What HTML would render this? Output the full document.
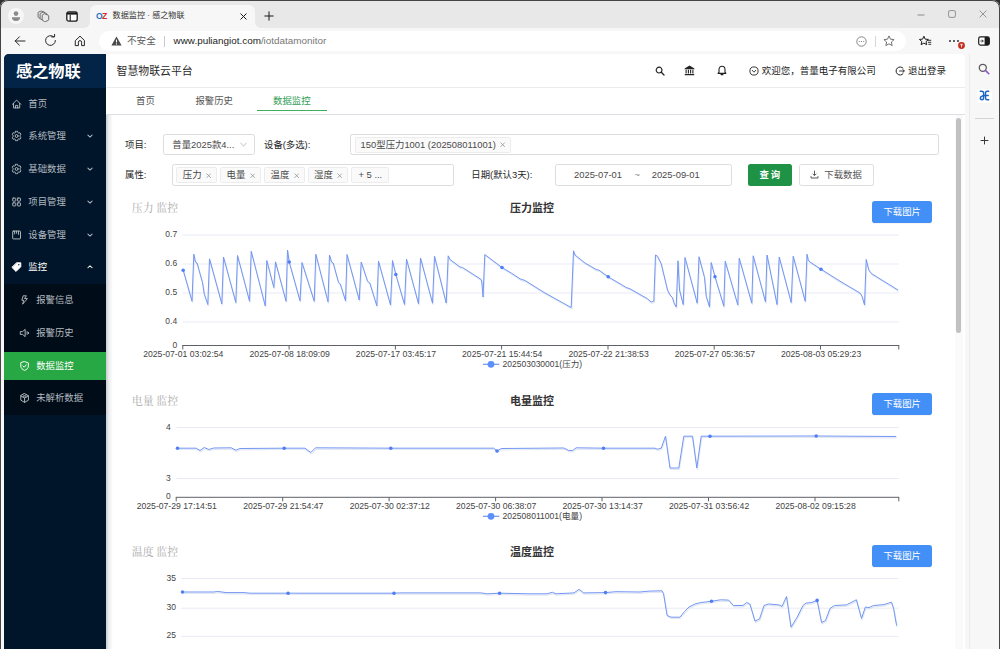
<!DOCTYPE html>
<html lang="zh-CN">
<head>
<meta charset="utf-8">
<title>数据监控 · 感之物联</title>
<style>
*{box-sizing:border-box;margin:0;padding:0}
html,body{width:1000px;height:649px;overflow:hidden;background:#f7f7f7}
body{font-family:"Liberation Sans","Noto Sans CJK SC",sans-serif;font-size:9.4px;color:#333;position:relative}
.abs{position:absolute}
#win{position:absolute;left:0;top:0;width:1000px;height:649px;background:#f7f7f7;overflow:hidden}
/* window frame */
#frame-l{display:none}
#frame-r{display:none}
#frame-t{display:none}
#corners{left:0;top:0;width:1000px;height:700px;border:1px solid #454545;border-radius:8px;box-shadow:0 0 0 12px #2e2e2e;pointer-events:none}
#titlebar{left:0;top:0;width:1000px;height:28px;background:#e8e8e8}
#tab{left:90px;top:5px;width:164.5px;height:23.5px;background:#f7f7f7;border-radius:6px 6px 0 0}
#toolbar{left:1px;top:28px;width:998px;height:26px;background:#f7f7f7}
#addr{left:99px;top:31px;width:807px;height:20px;background:#fff;border-radius:10px}
.t{position:absolute;white-space:nowrap;line-height:1}
/* page */
#page{left:4px;top:54px;width:960.5px;height:595px;background:#fff;border-radius:5px 5px 0 0;overflow:hidden}
#side{left:0;top:0;width:102px;height:595px;background:#001529}
#logo{left:0;top:0;width:102px;height:33.5px;background:#032347}
#logo .t{left:12px;top:9px;font-size:16.2px;font-weight:bold;color:#fff;letter-spacing:0}
.mi{position:absolute;left:0;width:102px;height:32.7px;color:#a6adb4}
.mi .t{top:50%;transform:translateY(-50%);font-size:9.4px}
.mi svg{position:absolute;top:50%;transform:translateY(-50%)}
#sub{left:0;top:230.3px;width:102px;height:130.5px;background:#000c17}
#active{left:0;top:297.9px;width:102px;height:28.1px;background:#28a745}
/* header */
#hdr{left:102px;top:0;width:858.5px;height:33.5px;background:#fff;border-bottom:1px solid #ebecee}
#tabs{left:102px;top:33.5px;width:858.5px;height:27px;background:#fff;border-bottom:1px solid #dcdfe4;box-shadow:0 1px 2px rgba(0,21,41,.06)}
#tabs .t{font-size:9.4px;color:#555;top:8.5px}
#ink{left:151px;top:22.3px;width:70.4px;height:1.6px;background:#3fae5e}
/* form */
.sel{position:absolute;border:1px solid #dcdcdc;border-radius:2.5px;background:#fff;height:21.6px}
.tag{padding-left:1px;position:absolute;border:1px solid #ececec;background:#fafafa;border-radius:1.5px;height:15.6px;top:2.2px;font-size:9.4px;color:#4a4a4a;line-height:14px;white-space:nowrap}
.lbl{position:absolute;font-size:9.4px;color:#262626;line-height:1;white-space:nowrap}
.btn{position:absolute;border-radius:2.5px;height:21.8px;font-size:9.4px;line-height:21px;text-align:center;white-space:nowrap}
.dl{position:absolute;left:766.2px;width:60px;height:21.8px;border-radius:2.8px;background:#4290f7;color:#fff;font-size:9.4px;line-height:21px;text-align:center;box-shadow:0 1px 1px rgba(0,0,0,.05)}
.h3{position:absolute;left:25.8px;font-family:"Liberation Serif","Noto Serif CJK SC",serif;font-size:10.9px;color:#a9a9a9;line-height:1;white-space:nowrap}
.ttl{position:absolute;left:404px;font-size:11px;font-weight:bold;color:#333;line-height:1;white-space:nowrap}
svg text{font-family:"Liberation Sans","Noto Sans CJK SC",sans-serif}
</style>
</head>
<body>
<div id="win">
  <div class="abs" id="titlebar"></div>
  <div class="abs" id="tab"></div>
  <div class="abs" id="toolbar"></div>
  <svg class="abs" style="left:84px;top:22px" width="6" height="6" viewBox="0 0 6 6"><path d="M6 0 V6 H0 A6 6 0 0 0 6 0 Z" fill="#f7f7f7"/></svg><svg class="abs" style="left:254.5px;top:22px" width="6" height="6" viewBox="0 0 6 6"><path d="M0 0 V6 H6 A6 6 0 0 1 0 0 Z" fill="#f7f7f7"/></svg>
  <div class="abs" id="addr"></div>
  <!--CHROME-START-->
  <svg class="abs" style="left:7.70px;top:8.00px" width="16" height="16" viewBox="0 0 16 16" ><circle cx="8" cy="8" r="8" fill="#f6f6f6"/><circle cx="8" cy="5.6" r="2.3" fill="#8a8a8a"/><path d="M3.9 9.3 H12.1 A4.1 3.6 0 0 1 3.9 9.3 Z" fill="#8a8a8a"/></svg>
  <svg class="abs" style="left:36.00px;top:9.00px" width="14" height="14" viewBox="0 0 14 14" ><g stroke="#666" fill="none" stroke-width="0.95" stroke-linejoin="round" stroke-linecap="round"><path d="M8.9 4.9 L12.2 6.2 Q12.7 6.4 12.7 7 V10.6 Q12.7 11.2 12.2 11.4 L9.5 12.6 Q8.9 12.8 8.4 12.5 L6.6 11.4 Q6.2 11.1 6.2 10.6 V6.4 Q6.2 5.8 6.8 5.6 Z"/><path d="M6.2 10.9 L4.6 10 Q4.1 9.7 4.1 9.2 V5 Q4.1 4.4 4.7 4.2 L6.9 3.4 Q7.5 3.2 8 3.4 L10.6 4.5 Q11 4.7 11 5.4"/><path d="M4.1 9.6 L2.6 8.7 Q2.1 8.4 2.1 7.9 V3.8 Q2.1 3.2 2.7 3 L4.9 2.2 Q5.5 2 6 2.2 L8.3 3.2"/></g></svg>
  <svg class="abs" style="left:65.50px;top:10.50px" width="12" height="11" viewBox="0 0 12 11" ><rect x="0.8" y="0.8" width="10.4" height="9.4" rx="2" fill="#fff" stroke="#1b1b1b" stroke-width="1.3"/><path d="M1 1.4 H11 V3.6 H1 Z" fill="#1b1b1b"/><path d="M4.2 3.6 V10" stroke="#1b1b1b" stroke-width="1.1"/></svg>
  <span class="t" style="left:96px;top:12px;font-size:8.6px;font-weight:bold;letter-spacing:-0.6px"><span style="color:#1f6fc4">O</span><span style="color:#d82b2b">Z</span></span>
  <span class="t" id="tabtitle" style="left:112.6px;top:11.8px;font-size:8.1px;color:#333">数据监控 · 感之物联</span>
  <svg class="abs" style="left:239.90px;top:13.10px" width="7" height="7" viewBox="0 0 7 7" ><path d="M0.8 0.8 L6.2 6.2 M6.2 0.8 L0.8 6.2" stroke="#1b1b1b" fill="none" stroke-linecap="round" stroke-linejoin="round" stroke-width="1"/></svg>
  <svg class="abs" style="left:263.60px;top:11.20px" width="10" height="10" viewBox="0 0 10 10" ><path d="M5 0.8 V9.2 M0.8 5 H9.2" stroke="#1b1b1b" fill="none" stroke-linecap="round" stroke-linejoin="round" stroke-width="1"/></svg>
  <svg class="abs" style="left:13.60px;top:35.60px" width="12" height="10" viewBox="0 0 12 10" ><path d="M11 5 H1.2 M5.4 0.8 L1.2 5 L5.4 9.2" stroke="#1b1b1b" fill="none" stroke-linecap="round" stroke-linejoin="round" stroke-width="0.95"/></svg>
  <svg class="abs" style="left:43.50px;top:34.10px" width="13" height="13" viewBox="0 0 13 13" ><path d="M11.4 6.5 A4.9 4.9 0 1 1 9.6 2.7" stroke="#1b1b1b" fill="none" stroke-linecap="round" stroke-linejoin="round" stroke-width="0.95"/><path d="M7.6 2.9 H10.6 V0.4" stroke="#1b1b1b" fill="none" stroke-linecap="round" stroke-linejoin="round" stroke-width="0.95"/></svg>
  <svg class="abs" style="left:73.90px;top:34.60px" width="12" height="12" viewBox="0 0 12 12" ><path d="M1.6 5.4 L6 1.2 L10.4 5.4 V10.6 H7.6 V7.2 A1.6 1.6 0 0 0 4.4 7.2 V10.6 H1.6 Z" stroke="#1b1b1b" fill="none" stroke-linecap="round" stroke-linejoin="round" stroke-width="0.95"/></svg>
  <svg class="abs" style="left:111.30px;top:36.20px" width="11" height="10" viewBox="0 0 11 10" ><path d="M5.5 0.6 L10.6 9.4 H0.4 Z" fill="#4a4a4a"/><path d="M5.5 3.6 V6.4" stroke="#fff" stroke-width="1.1"/><circle cx="5.5" cy="7.9" r="0.65" fill="#fff"/></svg>
  <span class="t" style="left:127px;top:36.3px;font-size:9.6px;color:#5a5a5a">不安全</span>
  <div class="abs" style="left:164.2px;top:35.5px;width:1px;height:11px;background:#c9c9c9"></div>
  <span class="t" id="url" style="left:173.6px;top:36.2px;font-size:9.88px;color:#1b1b1b;letter-spacing:0">www.puliangiot.com<span style="color:#777">/iotdatamonitor</span></span>
  <svg class="abs" style="left:855.90px;top:35.50px" width="11" height="11" viewBox="0 0 11 11" ><circle cx="5.5" cy="5.5" r="4.7" fill="none" stroke="#7a7a7a" stroke-width="0.9"/><circle cx="3.3" cy="5.5" r="0.6" fill="#7a7a7a"/><circle cx="5.5" cy="5.5" r="0.6" fill="#7a7a7a"/><circle cx="7.7" cy="5.5" r="0.6" fill="#7a7a7a"/></svg>
  <div class="abs" style="left:875px;top:35.5px;width:1px;height:11px;background:#d6d6d6"></div>
  <svg class="abs" style="left:883.40px;top:35.00px" width="12" height="12" viewBox="0 0 12 12" ><path d="M6 0.9 L7.5 4.2 L11.1 4.6 L8.4 7 L9.2 10.6 L6 8.8 L2.8 10.6 L3.6 7 L0.9 4.6 L4.5 4.2 Z" fill="none" stroke="#6a6a6a" stroke-width="0.95" stroke-linejoin="round"/></svg>
  <svg class="abs" style="left:919.10px;top:35.00px" width="13" height="12" viewBox="0 0 13 12" ><path d="M4.90 1.20 L6.19 4.12 L9.37 4.45 L6.99 6.58 L7.66 9.70 L4.90 8.10 L2.14 9.70 L2.81 6.58 L0.43 4.45 L3.61 4.12 Z" stroke="#1b1b1b" fill="none" stroke-linejoin="round" stroke-width="1"/><path d="M8.3 5.3 H12.2 M8.9 7.3 H12.2 M9.4 9.3 H12.2" stroke="#1b1b1b" stroke-width="0.9"/><path d="M7.2 4.2 H9.4 V10.4 H7.2" fill="#f7f7f7" stroke="none" opacity="0"/></svg>
  <svg class="abs" style="left:948.40px;top:39.00px" width="12" height="4" viewBox="0 0 12 4" ><circle cx="2" cy="2" r="0.9" fill="#1b1b1b"/><circle cx="6" cy="2" r="0.9" fill="#1b1b1b"/><circle cx="10" cy="2" r="0.9" fill="#1b1b1b"/></svg>
  <svg class="abs" style="left:957.80px;top:41.50px" width="7" height="7" viewBox="0 0 7 7" ><circle cx="3.5" cy="3.5" r="3.4" fill="#c42b1c"/><path d="M3.5 5.4 V2 M2.1 3.3 L3.5 1.8 L4.9 3.3" stroke="#fff" stroke-width="0.8" fill="none"/></svg>
  <svg class="abs" style="left:978.00px;top:36.00px" width="12" height="10" viewBox="0 0 12 10" ><rect x="0.7" y="0.9" width="10.6" height="8.2" rx="1.8" fill="#fff" stroke="#1b1b1b" stroke-width="1.2"/><path d="M6.6 0.9 H9.6 A1.7 1.7 0 0 1 11.3 2.6 V7.4 A1.7 1.7 0 0 1 9.6 9.1 H6.6 Z" fill="#1b1b1b"/><path d="M2.4 5 H5.2 M4 3.6 L5.3 5 L4 6.4" stroke="#1b1b1b" stroke-width="0.8" fill="none"/></svg>
  <svg class="abs" style="left:916.60px;top:13.60px" width="8" height="2" viewBox="0 0 8 2" ><path d="M0.5 1 H7.5" stroke="#8a8a8a" stroke-width="1"/></svg>
  <svg class="abs" style="left:948.00px;top:10.40px" width="8" height="8" viewBox="0 0 8 8" ><rect x="0.6" y="0.6" width="6.8" height="6.8" rx="1.4" fill="none" stroke="#8a8a8a" stroke-width="0.9"/></svg>
  <svg class="abs" style="left:979.40px;top:10.40px" width="8" height="8" viewBox="0 0 8 8" ><path d="M0.6 0.6 L7.4 7.4 M7.4 0.6 L0.6 7.4" stroke="#8a8a8a" stroke-width="0.9"/></svg>
  <!--CHROME-END-->
  <div class="abs" id="page">
    <div class="abs" id="side">
      <div class="abs" id="logo"><span class="t">感之物联</span></div>
      <!--MENU-START-->
      <div class="abs" id="sub"></div>
      <div class="abs" id="active"></div>
      <div class="mi" style="top:33.25px;color:#b4bac0"><svg style="left:6.60px" width="11.2" height="11.2" viewBox="0 0 20 20" fill="none" stroke="#b4bac0" stroke-width="1.7" stroke-linejoin="round" stroke-linecap="round"><path d="M2.5 10.5 L10 3 L17.5 10.5"/><path d="M4.5 9 V17 H15.5 V9"/><path d="M8 17 V12.5 H12 V17"/></svg><span class="t" style="left:24.3px">首页</span></div>
      <div class="mi" style="top:65.95px;color:#b4bac0"><svg style="left:6.60px" width="11.2" height="11.2" viewBox="0 0 20 20" fill="none" stroke="#b4bac0" stroke-width="1.7" stroke-linejoin="round" stroke-linecap="round"><path d="M8.28 1.39 L11.72 1.39 L12.07 3.67 L14.12 4.93 L16.15 4.11 L17.87 7.28 L16.19 8.74 L16.19 11.26 L17.87 12.72 L16.15 15.89 L14.12 15.07 L12.07 16.33 L11.72 18.61 L8.28 18.61 L7.93 16.33 L5.88 15.07 L3.85 15.89 L2.13 12.72 L3.81 11.26 L3.81 8.74 L2.13 7.28 L3.85 4.11 L5.88 4.93 L7.93 3.67 Z"/><circle cx="10" cy="10" r="2.6"/></svg><span class="t" style="left:24.3px">系统管理</span><svg style="left:82.9px" width="6" height="6" viewBox="0 0 20 20" fill="none" stroke="#b4bac0" stroke-width="3.4" stroke-linecap="round" stroke-linejoin="round"><path d="M3 7 L10 13.5 L17 7"/></svg></div>
      <div class="mi" style="top:98.75px;color:#b4bac0"><svg style="left:6.60px" width="11.2" height="11.2" viewBox="0 0 20 20" fill="none" stroke="#b4bac0" stroke-width="1.7" stroke-linejoin="round" stroke-linecap="round"><path d="M8.28 1.39 L11.72 1.39 L12.07 3.67 L14.12 4.93 L16.15 4.11 L17.87 7.28 L16.19 8.74 L16.19 11.26 L17.87 12.72 L16.15 15.89 L14.12 15.07 L12.07 16.33 L11.72 18.61 L8.28 18.61 L7.93 16.33 L5.88 15.07 L3.85 15.89 L2.13 12.72 L3.81 11.26 L3.81 8.74 L2.13 7.28 L3.85 4.11 L5.88 4.93 L7.93 3.67 Z"/><circle cx="10" cy="10" r="2.6"/></svg><span class="t" style="left:24.3px">基础数据</span><svg style="left:82.9px" width="6" height="6" viewBox="0 0 20 20" fill="none" stroke="#b4bac0" stroke-width="3.4" stroke-linecap="round" stroke-linejoin="round"><path d="M3 7 L10 13.5 L17 7"/></svg></div>
      <div class="mi" style="top:131.45px;color:#b4bac0"><svg style="left:6.60px" width="11.2" height="11.2" viewBox="0 0 20 20" fill="none" stroke="#b4bac0" stroke-width="1.7" stroke-linejoin="round" stroke-linecap="round"><rect x="3" y="3" width="5.5" height="5.5" rx="1"/><rect x="11.5" y="3" width="5.5" height="5.5" rx="1"/><rect x="3" y="11.5" width="5.5" height="5.5" rx="1"/><rect x="11.5" y="11.5" width="5.5" height="5.5" rx="1"/></svg><span class="t" style="left:24.3px">项目管理</span><svg style="left:82.9px" width="6" height="6" viewBox="0 0 20 20" fill="none" stroke="#b4bac0" stroke-width="3.4" stroke-linecap="round" stroke-linejoin="round"><path d="M3 7 L10 13.5 L17 7"/></svg></div>
      <div class="mi" style="top:164.25px;color:#b4bac0"><svg style="left:6.60px" width="11.2" height="11.2" viewBox="0 0 20 20" fill="none" stroke="#b4bac0" stroke-width="1.7" stroke-linejoin="round" stroke-linecap="round"><rect x="3" y="3" width="14" height="14" rx="1"/><path d="M6.5 3 V8 M10 3 V7 M13.5 3 V9"/></svg><span class="t" style="left:24.3px">设备管理</span><svg style="left:82.9px" width="6" height="6" viewBox="0 0 20 20" fill="none" stroke="#b4bac0" stroke-width="3.4" stroke-linecap="round" stroke-linejoin="round"><path d="M3 7 L10 13.5 L17 7"/></svg></div>
      <div class="mi" style="top:196.95px;color:#ffffff"><svg style="left:6.60px" width="11.2" height="11.2" viewBox="0 0 20 20" fill="none" stroke="#ffffff" stroke-width="1.7" stroke-linejoin="round" stroke-linecap="round" ><path d="M10.5 2.5 L17.5 2.5 L17.5 9.5 L9 18 L2 11 Z" fill="#ffffff"/><circle cx="14" cy="6" r="1.2" fill="#001529" stroke="none"/><path d="M5 17.5 L13 17.5" stroke-width="1.2" opacity="0"/></svg><span class="t" style="left:24.3px">监控</span><svg style="left:82.9px" width="6" height="6" viewBox="0 0 20 20" fill="none" stroke="#ffffff" stroke-width="3.4" stroke-linecap="round" stroke-linejoin="round"><path d="M3 12.5 L10 6 L17 12.5"/></svg></div>
      <div class="mi" style="top:229.75px;color:#b4bac0"><svg style="left:14.80px" width="11.2" height="11.2" viewBox="0 0 20 20" fill="none" stroke="#b4bac0" stroke-width="1.7" stroke-linejoin="round" stroke-linecap="round"><path d="M12.5 2.5 H7.5 L5 10.5 H8.5 L6.5 17.5 L15 7.5 H10.5 Z"/></svg><span class="t" style="left:32.2px">报警信息</span></div>
      <div class="mi" style="top:262.45px;color:#b4bac0"><svg style="left:14.80px" width="11.2" height="11.2" viewBox="0 0 20 20" fill="none" stroke="#b4bac0" stroke-width="1.7" stroke-linejoin="round" stroke-linecap="round"><path d="M3 7.5 H6.5 L11 3.5 V16.5 L6.5 12.5 H3 Z"/><path d="M14.5 7.5 V12.5 M17 9 V11"/></svg><span class="t" style="left:32.2px">报警历史</span></div>
      <div class="mi" style="top:295.25px;color:#ffffff"><svg style="left:14.80px" width="11.2" height="11.2" viewBox="0 0 20 20" fill="none" stroke="#ffffff" stroke-width="1.7" stroke-linejoin="round" stroke-linecap="round"><path d="M10 2.2 L16.8 4.6 V10 C16.8 14 13.5 16.6 10 17.9 C6.5 16.6 3.2 14 3.2 10 V4.6 Z"/><path d="M7 10 L9.3 12.2 L13.2 7.8"/></svg><span class="t" style="left:32.2px">数据监控</span></div>
      <div class="mi" style="top:327.95px;color:#b4bac0"><svg style="left:14.80px" width="11.2" height="11.2" viewBox="0 0 20 20" fill="none" stroke="#b4bac0" stroke-width="1.7" stroke-linejoin="round" stroke-linecap="round"><path d="M10 2.2 L16.8 6.1 V13.9 L10 17.8 L3.2 13.9 V6.1 Z"/><path d="M3.2 6.1 L10 10 L16.8 6.1 M10 10 V17.8"/><path d="M6.6 4.2 L13.4 8.1 M13.4 4.2 L6.6 8.1" stroke-width="1.2"/></svg><span class="t" style="left:32.2px">未解析数据</span></div>
      <!--MENU-END-->
    </div>
    <div class="abs" id="hdr">
      <!--HDR-START-->
      <span class="t" style="left:10.5px;top:12.2px;font-size:10.9px;color:#2b2b2b">智慧物联云平台</span>
      <svg class="abs" style="left:548.80px;top:12.00px" width="10" height="10" viewBox="0 0 10 10" ><circle cx="4.1" cy="4.1" r="2.9" fill="none" stroke="#222" stroke-width="1.2"/><path d="M6.3 6.3 L9 9" stroke="#222" stroke-width="1.3" stroke-linecap="round"/></svg>
      <svg class="abs" style="left:577.90px;top:11.30px" width="11" height="11" viewBox="0 0 11 11" ><path d="M5.5 0.6 L10.4 3.4 V4.2 H0.6 V3.4 Z" fill="#222"/><path d="M2.1 4.8 V8.6 M4.4 4.8 V8.6 M6.6 4.8 V8.6 M8.9 4.8 V8.6" stroke="#222" stroke-width="1.1"/><path d="M0.8 9.6 H10.2" stroke="#222" stroke-width="1.3"/></svg>
      <svg class="abs" style="left:611.40px;top:11.30px" width="10" height="11" viewBox="0 0 10 11" ><path d="M5 1.2 C7 1.2 8 2.8 8 4.6 V7.2 L8.9 8.4 H1.1 L2 7.2 V4.6 C2 2.8 3 1.2 5 1.2 Z" fill="none" stroke="#222" stroke-width="1.1" stroke-linejoin="round"/><path d="M4 9.6 H6" stroke="#222" stroke-width="1.1" stroke-linecap="round"/></svg>
      <svg class="abs" style="left:642.60px;top:12.20px" width="10" height="10" viewBox="0 0 10 10" ><circle cx="5" cy="5" r="4.1" fill="none" stroke="#222" stroke-width="0.9"/><path d="M3.2 4.3 L5 6.2 L6.8 4.3" fill="none" stroke="#222" stroke-width="0.9" stroke-linecap="round" stroke-linejoin="round"/></svg>
      <span class="t" id="welcome" style="left:655.7px;top:12.4px;font-size:9.5px;color:#222">欢迎您，普量电子有限公司</span>
      <svg class="abs" style="left:789.00px;top:12.00px" width="10" height="10" viewBox="0 0 10 10" ><path d="M8.3 2.6 A4 4 0 1 0 8.3 7.4" fill="none" stroke="#222" stroke-width="1"/><path d="M4.6 5 H9.2 M7.9 3.6 L9.3 5 L7.9 6.4" fill="none" stroke="#222" stroke-width="0.9" stroke-linecap="round" stroke-linejoin="round"/></svg>
      <span class="t" style="left:802px;top:12.4px;font-size:9.5px;color:#222">退出登录</span>
      <!--HDR-END-->
    </div>
    <div class="abs" id="tabs">
      <span class="t" style="left:30px">首页</span>
      <span class="t" style="left:89.4px">报警历史</span>
      <span class="t" style="left:167px;color:#2f9e53">数据监控</span>
      <div class="abs" id="ink"></div>
    </div>
    <div class="abs" id="content" style="left:102px;top:61px;width:858.5px;height:534px;background:#fff">
      <div class="abs" style="left:0;top:0;width:7px;height:534px;background:linear-gradient(90deg,rgba(0,21,41,.22),rgba(0,21,41,.08) 40%,rgba(0,21,41,0))"></div>
      <!--FORM-START-->
      <span class="lbl" style="left:19px;top:25px">项目:</span>
      <div class="sel" style="left:57.3px;top:18.8px;width:91.8px"><span class="t" style="left:8px;top:5.3px;font-size:9.4px;color:#4a4a4a">普量2025款4...</span><svg class="abs" style="left:76px;top:7.6px" width="7" height="5" viewBox="0 0 7 5"><path d="M0.5 0.7 L3.5 4.2 L6.5 0.7" fill="none" stroke="#b5b5b5" stroke-width="0.8"/></svg></div>
      <span class="lbl" style="left:158px;top:25px">设备(多选):</span>
      <div class="sel" style="left:244.4px;top:18.8px;width:588.6px"><span class="tag" style="left:3.4px;width:155.8px;text-align:center">150型压力1001 (202508011001)<svg width="5.4" height="5.4" viewBox="0 0 6 6" style="margin-left:4.4px;vertical-align:0.2px"><path d="M0.6 0.6 L5.4 5.4 M5.4 0.6 L0.6 5.4" stroke="#8a8a8a" stroke-width="0.8"/></svg></span></div>
      <span class="lbl" style="left:19px;top:55.2px">属性:</span>
      <div class="sel" style="left:66.4px;top:49.1px;width:282px"><span class="tag" style="left:2.9px;width:40.7px;text-align:center">压力<svg width="5.4" height="5.4" viewBox="0 0 6 6" style="margin-left:4.4px;vertical-align:0.2px"><path d="M0.6 0.6 L5.4 5.4 M5.4 0.6 L0.6 5.4" stroke="#8a8a8a" stroke-width="0.8"/></svg></span><span class="tag" style="left:46.6px;width:40.6px;text-align:center">电量<svg width="5.4" height="5.4" viewBox="0 0 6 6" style="margin-left:4.4px;vertical-align:0.2px"><path d="M0.6 0.6 L5.4 5.4 M5.4 0.6 L0.6 5.4" stroke="#8a8a8a" stroke-width="0.8"/></svg></span><span class="tag" style="left:90.6px;width:40.6px;text-align:center">温度<svg width="5.4" height="5.4" viewBox="0 0 6 6" style="margin-left:4.4px;vertical-align:0.2px"><path d="M0.6 0.6 L5.4 5.4 M5.4 0.6 L0.6 5.4" stroke="#8a8a8a" stroke-width="0.8"/></svg></span><span class="tag" style="left:134.2px;width:40.4px;text-align:center">湿度<svg width="5.4" height="5.4" viewBox="0 0 6 6" style="margin-left:4.4px;vertical-align:0.2px"><path d="M0.6 0.6 L5.4 5.4 M5.4 0.6 L0.6 5.4" stroke="#8a8a8a" stroke-width="0.8"/></svg></span><span class="tag" style="left:177.8px;width:37.4px;text-align:center">+ 5 ...</span></div>
      <span class="lbl" style="left:365.3px;top:55.2px">日期(默认3天):</span>
      <div class="sel" style="left:449px;top:49.1px;width:176.6px"><span class="t" style="left:18px;top:5.4px;font-size:9.4px;color:#4a4a4a">2025-07-01</span><span class="t" style="left:78.5px;top:5.4px;font-size:9.4px;color:#8a8a8a">~</span><span class="t" style="left:95.7px;top:5.4px;font-size:9.4px;color:#4a4a4a">2025-09-01</span></div>
      <div class="btn" style="left:642px;top:48.9px;width:43.6px;background:#1e9346;color:#fff;font-weight:bold;letter-spacing:2px;text-indent:2px">查询</div>
      <div class="btn" style="left:692.7px;top:48.9px;width:75px;background:#fff;border:1px solid #dedede;color:#555"><svg class="abs" style="left:10.6px;top:5px" width="9" height="9" viewBox="0 0 9 9"><path d="M4.5 0.6 V5.4 M2.6 3.7 L4.5 5.6 L6.4 3.7 M1 6.2 V8 H8 V6.2" fill="none" stroke="#4a4a4a" stroke-width="0.9"/></svg><span class="t" style="left:24.6px;top:5px;font-size:9.4px">下载数据</span></div>
      <span class="h3" style="top:87.8px">压力 监控</span>
      <span class="ttl" style="top:88.1px">压力监控</span>
      <div class="dl" style="top:86.1px">下载图片</div>
      <span class="h3" style="top:280.7px">电量 监控</span>
      <span class="ttl" style="top:281.0px">电量监控</span>
      <div class="dl" style="top:278.3px">下载图片</div>
      <span class="h3" style="top:432.1px">温度 监控</span>
      <span class="ttl" style="top:432.4px">温度监控</span>
      <div class="dl" style="top:429.9px">下载图片</div>
      <!--FORM-END-->
      <!--CHARTS-START-->
      <svg class="abs" style="left:0;top:0" width="858.5" height="534" viewBox="106 115 858.5 534"><g font-size="8.5" fill="#444"><path d="M182.5 235 H899" stroke="#e8ebf5" stroke-width="1" fill="none"/><path d="M182.5 264 H899" stroke="#e8ebf5" stroke-width="1" fill="none"/><path d="M182.5 293 H899" stroke="#e8ebf5" stroke-width="1" fill="none"/><path d="M182.5 322 H899" stroke="#e8ebf5" stroke-width="1" fill="none"/><path d="M182.2 345.5 H899.2 M182.8 345.5 v4 M289.1 345.5 v4 M395.4 345.5 v4 M501.6 345.5 v4 M608.0 345.5 v4 M714.2 345.5 v4 M820.5 345.5 v4 M898.8 345.5 v4 " stroke="#5f6168" stroke-width="1" fill="none"/><text x="177.2" y="237.0" text-anchor="end">0.7</text><text x="177.2" y="266.0" text-anchor="end">0.6</text><text x="177.2" y="295.0" text-anchor="end">0.5</text><text x="177.2" y="324.0" text-anchor="end">0.4</text><text x="177.2" y="347.7" text-anchor="end">0</text><text x="183.3" y="357.4" text-anchor="middle" textLength="80.3" lengthAdjust="spacingAndGlyphs">2025-07-01 03:02:54</text><text x="289.7" y="357.4" text-anchor="middle" textLength="80.3" lengthAdjust="spacingAndGlyphs">2025-07-08 18:09:09</text><text x="396.0" y="357.4" text-anchor="middle" textLength="80.3" lengthAdjust="spacingAndGlyphs">2025-07-17 03:45:17</text><text x="502.2" y="357.4" text-anchor="middle" textLength="80.3" lengthAdjust="spacingAndGlyphs">2025-07-21 15:44:54</text><text x="608.6" y="357.4" text-anchor="middle" textLength="80.3" lengthAdjust="spacingAndGlyphs">2025-07-22 21:38:53</text><text x="714.9" y="357.4" text-anchor="middle" textLength="80.3" lengthAdjust="spacingAndGlyphs">2025-07-27 05:36:57</text><text x="821.1" y="357.4" text-anchor="middle" textLength="80.3" lengthAdjust="spacingAndGlyphs">2025-08-03 05:29:23</text><polyline points="183.2,270.2 192.0,301.2 193.8,254.2 195.5,262.0 197.0,263.0 202.5,282.5 204.2,293.8 207.8,304.5 209.5,258.8 221.8,303.8 223.5,257.0 235.8,302.5 237.5,255.5 249.5,301.2 251.2,251.2 265.2,305.8 266.8,260.5 273.8,287.5 275.5,261.8 286.0,301.2 287.5,250.0 289.2,262.0 300.0,300.8 302.0,262.5 314.2,301.2 315.8,254.2 328.0,301.8 329.5,255.0 331.5,262.0 333.2,263.0 338.5,282.5 340.2,283.8 345.5,300.8 347.0,254.5 359.2,300.0 361.2,262.0 367.5,281.2 369.8,283.0 376.8,305.8 378.5,261.2 390.5,305.0 392.5,260.5 395.8,274.5 404.5,304.5 406.5,259.2 418.5,303.8 420.5,258.0 432.5,303.2 434.5,256.2 446.2,303.0 448.2,255.8 450.0,259.5 460.0,267.0 462.5,267.5 481.2,279.5 481.8,282.0 483.0,297.0 484.8,254.5 502.0,267.5 511.2,273.0 520.0,278.8 525.0,280.5 545.0,293.0 571.2,307.5 573.5,250.8 575.0,255.0 585.0,263.0 596.2,269.5 598.8,270.0 608.2,276.8 620.0,283.8 626.2,287.5 630.0,288.8 647.5,298.8 651.2,302.0 653.8,301.2 655.5,255.0 657.5,256.2 661.2,263.8 667.5,290.0 670.0,295.0 672.5,297.5 673.8,302.5 676.2,307.0 678.0,260.8 679.5,290.0 683.2,304.5 685.0,257.5 697.2,303.2 699.0,256.8 704.5,277.5 706.2,296.2 709.5,307.0 711.2,262.5 715.0,276.8 723.8,306.2 725.2,261.2 737.8,305.0 739.2,258.2 751.8,303.2 753.2,255.8 765.5,302.0 767.0,255.0 777.0,304.5 779.2,257.0 791.2,302.5 793.2,256.2 805.2,301.2 807.0,254.2 808.2,260.0 810.0,262.0 821.0,269.2 840.0,281.2 860.0,293.0 862.0,296.2 864.5,305.0 866.2,259.5 868.8,270.0 871.8,273.8 898.0,290.0" fill="none" stroke="#c9d3ea" stroke-width="1.2" stroke-linejoin="round" transform="translate(0.6,1.3)" opacity="0.55"/><polyline points="183.2,270.2 192.0,301.2 193.8,254.2 195.5,262.0 197.0,263.0 202.5,282.5 204.2,293.8 207.8,304.5 209.5,258.8 221.8,303.8 223.5,257.0 235.8,302.5 237.5,255.5 249.5,301.2 251.2,251.2 265.2,305.8 266.8,260.5 273.8,287.5 275.5,261.8 286.0,301.2 287.5,250.0 289.2,262.0 300.0,300.8 302.0,262.5 314.2,301.2 315.8,254.2 328.0,301.8 329.5,255.0 331.5,262.0 333.2,263.0 338.5,282.5 340.2,283.8 345.5,300.8 347.0,254.5 359.2,300.0 361.2,262.0 367.5,281.2 369.8,283.0 376.8,305.8 378.5,261.2 390.5,305.0 392.5,260.5 395.8,274.5 404.5,304.5 406.5,259.2 418.5,303.8 420.5,258.0 432.5,303.2 434.5,256.2 446.2,303.0 448.2,255.8 450.0,259.5 460.0,267.0 462.5,267.5 481.2,279.5 481.8,282.0 483.0,297.0 484.8,254.5 502.0,267.5 511.2,273.0 520.0,278.8 525.0,280.5 545.0,293.0 571.2,307.5 573.5,250.8 575.0,255.0 585.0,263.0 596.2,269.5 598.8,270.0 608.2,276.8 620.0,283.8 626.2,287.5 630.0,288.8 647.5,298.8 651.2,302.0 653.8,301.2 655.5,255.0 657.5,256.2 661.2,263.8 667.5,290.0 670.0,295.0 672.5,297.5 673.8,302.5 676.2,307.0 678.0,260.8 679.5,290.0 683.2,304.5 685.0,257.5 697.2,303.2 699.0,256.8 704.5,277.5 706.2,296.2 709.5,307.0 711.2,262.5 715.0,276.8 723.8,306.2 725.2,261.2 737.8,305.0 739.2,258.2 751.8,303.2 753.2,255.8 765.5,302.0 767.0,255.0 777.0,304.5 779.2,257.0 791.2,302.5 793.2,256.2 805.2,301.2 807.0,254.2 808.2,260.0 810.0,262.0 821.0,269.2 840.0,281.2 860.0,293.0 862.0,296.2 864.5,305.0 866.2,259.5 868.8,270.0 871.8,273.8 898.0,290.0" fill="none" stroke="#7396f3" stroke-width="1" stroke-linejoin="round"/><circle cx="183.2" cy="270.2" r="1.8" fill="#4f7ef5"/><circle cx="289.2" cy="262.0" r="1.8" fill="#4f7ef5"/><circle cx="395.8" cy="274.5" r="1.8" fill="#4f7ef5"/><circle cx="502.0" cy="267.5" r="1.8" fill="#4f7ef5"/><circle cx="608.2" cy="276.8" r="1.8" fill="#4f7ef5"/><circle cx="715.0" cy="276.8" r="1.8" fill="#4f7ef5"/><circle cx="821.0" cy="269.2" r="1.8" fill="#4f7ef5"/><path d="M483 364.3 H499.3" stroke="#7396f3" stroke-width="1.2"/><circle cx="491" cy="364.3" r="3.4" fill="#5b8ff9"/><text x="502.5" y="367.4" textLength="79.5" lengthAdjust="spacingAndGlyphs">202503030001(压力)</text><path d="M176.5 427.5 H899" stroke="#e8ebf5" stroke-width="1" fill="none"/><path d="M176.5 478.5 H899" stroke="#e8ebf5" stroke-width="1" fill="none"/><path d="M175.8 497.3 H899.2 M176.2 497.3 v4 M282.7 497.3 v4 M389.1 497.3 v4 M495.6 497.3 v4 M602.0 497.3 v4 M708.5 497.3 v4 M815.0 497.3 v4 M898.8 497.3 v4 " stroke="#5f6168" stroke-width="1" fill="none"/><text x="170.8" y="429.5" text-anchor="end">4</text><text x="170.8" y="480.5" text-anchor="end">3</text><text x="170.8" y="499.2" text-anchor="end">0</text><text x="176.8" y="508.9" text-anchor="middle" textLength="80.3" lengthAdjust="spacingAndGlyphs">2025-07-29 17:14:51</text><text x="283.3" y="508.9" text-anchor="middle" textLength="80.3" lengthAdjust="spacingAndGlyphs">2025-07-29 21:54:47</text><text x="389.8" y="508.9" text-anchor="middle" textLength="80.3" lengthAdjust="spacingAndGlyphs">2025-07-30 02:37:12</text><text x="496.2" y="508.9" text-anchor="middle" textLength="80.3" lengthAdjust="spacingAndGlyphs">2025-07-30 06:38:07</text><text x="602.6" y="508.9" text-anchor="middle" textLength="80.3" lengthAdjust="spacingAndGlyphs">2025-07-30 13:14:37</text><text x="709.1" y="508.9" text-anchor="middle" textLength="80.3" lengthAdjust="spacingAndGlyphs">2025-07-31 03:56:42</text><text x="815.6" y="508.9" text-anchor="middle" textLength="80.3" lengthAdjust="spacingAndGlyphs">2025-08-02 09:15:28</text><polyline points="177.5,448.2 196.2,448.2 200.0,450.5 204.2,447.5 208.8,449.5 213.8,448.0 231.2,447.8 235.8,450.2 240.0,448.5 284.2,448.2 305.0,448.2 310.8,452.5 315.5,447.8 390.8,448.2 493.8,448.2 497.0,451.0 501.2,448.5 563.8,448.0 568.8,450.5 572.5,450.5 576.2,447.8 603.5,448.2 655.0,448.2 657.5,449.2 661.2,448.2 665.5,436.2 670.0,468.0 678.8,468.0 683.8,436.2 692.5,436.2 696.8,468.0 701.2,436.2 710.0,436.2 816.2,436.0 896.2,436.5" fill="none" stroke="#c9d3ea" stroke-width="1.2" stroke-linejoin="round" transform="translate(0.6,1.3)" opacity="0.55"/><polyline points="177.5,448.2 196.2,448.2 200.0,450.5 204.2,447.5 208.8,449.5 213.8,448.0 231.2,447.8 235.8,450.2 240.0,448.5 284.2,448.2 305.0,448.2 310.8,452.5 315.5,447.8 390.8,448.2 493.8,448.2 497.0,451.0 501.2,448.5 563.8,448.0 568.8,450.5 572.5,450.5 576.2,447.8 603.5,448.2 655.0,448.2 657.5,449.2 661.2,448.2 665.5,436.2 670.0,468.0 678.8,468.0 683.8,436.2 692.5,436.2 696.8,468.0 701.2,436.2 710.0,436.2 816.2,436.0 896.2,436.5" fill="none" stroke="#7396f3" stroke-width="1" stroke-linejoin="round"/><circle cx="177.5" cy="448.2" r="1.8" fill="#4f7ef5"/><circle cx="284.2" cy="448.2" r="1.8" fill="#4f7ef5"/><circle cx="390.8" cy="448.2" r="1.8" fill="#4f7ef5"/><circle cx="497.0" cy="451.0" r="1.8" fill="#4f7ef5"/><circle cx="603.5" cy="448.2" r="1.8" fill="#4f7ef5"/><circle cx="710.0" cy="436.2" r="1.8" fill="#4f7ef5"/><circle cx="816.2" cy="436.0" r="1.8" fill="#4f7ef5"/><path d="M483 516.3 H499.3" stroke="#7396f3" stroke-width="1.2"/><circle cx="491" cy="516.3" r="3.4" fill="#5b8ff9"/><text x="502.5" y="519.4" textLength="79.5" lengthAdjust="spacingAndGlyphs">202508011001(电量)</text><path d="M181 578.5 H898.5" stroke="#e8ebf5" stroke-width="1" fill="none"/><path d="M181 608.2 H898.5" stroke="#e8ebf5" stroke-width="1" fill="none"/><path d="M181 636.4 H898.5" stroke="#e8ebf5" stroke-width="1" fill="none"/><text x="176" y="580.5" text-anchor="end">35</text><text x="176" y="610.2" text-anchor="end">30</text><text x="176" y="638.4" text-anchor="end">25</text><polyline points="182.5,592.0 214.0,592.0 217.6,591.4 226.0,592.6 244.0,592.6 250.0,593.2 288.1,593.2 394.0,593.2 400.0,592.9 481.0,592.9 487.0,593.8 499.6,593.2 529.0,593.8 547.0,593.8 552.4,592.3 556.0,593.8 574.0,592.9 579.1,589.3 583.6,592.9 605.5,592.6 616.0,591.7 640.0,592.0 649.0,591.1 650.0,591.1 662.0,590.8 663.5,593.5 667.1,615.4 671.0,617.2 680.0,617.2 684.5,611.5 689.0,607.0 695.0,604.0 701.0,602.5 711.5,601.3 720.5,599.8 728.6,600.1 733.4,605.5 743.0,605.5 746.6,602.5 749.9,604.0 755.0,621.1 759.5,619.0 764.0,605.5 768.5,604.0 779.0,604.9 782.0,606.4 786.5,596.5 791.0,627.1 797.0,617.5 803.0,605.5 806.0,603.1 812.0,602.5 817.1,600.4 821.6,622.6 825.5,620.5 830.0,608.5 834.5,605.5 846.5,604.9 856.4,599.8 861.5,618.4 865.4,607.0 869.0,607.6 873.5,605.5 884.0,604.6 891.5,602.2 893.6,608.5 896.6,625.6" fill="none" stroke="#c9d3ea" stroke-width="1.2" stroke-linejoin="round" transform="translate(0.6,1.3)" opacity="0.55"/><polyline points="182.5,592.0 214.0,592.0 217.6,591.4 226.0,592.6 244.0,592.6 250.0,593.2 288.1,593.2 394.0,593.2 400.0,592.9 481.0,592.9 487.0,593.8 499.6,593.2 529.0,593.8 547.0,593.8 552.4,592.3 556.0,593.8 574.0,592.9 579.1,589.3 583.6,592.9 605.5,592.6 616.0,591.7 640.0,592.0 649.0,591.1 650.0,591.1 662.0,590.8 663.5,593.5 667.1,615.4 671.0,617.2 680.0,617.2 684.5,611.5 689.0,607.0 695.0,604.0 701.0,602.5 711.5,601.3 720.5,599.8 728.6,600.1 733.4,605.5 743.0,605.5 746.6,602.5 749.9,604.0 755.0,621.1 759.5,619.0 764.0,605.5 768.5,604.0 779.0,604.9 782.0,606.4 786.5,596.5 791.0,627.1 797.0,617.5 803.0,605.5 806.0,603.1 812.0,602.5 817.1,600.4 821.6,622.6 825.5,620.5 830.0,608.5 834.5,605.5 846.5,604.9 856.4,599.8 861.5,618.4 865.4,607.0 869.0,607.6 873.5,605.5 884.0,604.6 891.5,602.2 893.6,608.5 896.6,625.6" fill="none" stroke="#7396f3" stroke-width="1" stroke-linejoin="round"/><circle cx="182.5" cy="592.0" r="1.8" fill="#4f7ef5"/><circle cx="288.1" cy="593.2" r="1.8" fill="#4f7ef5"/><circle cx="394.0" cy="593.2" r="1.8" fill="#4f7ef5"/><circle cx="499.6" cy="593.2" r="1.8" fill="#4f7ef5"/><circle cx="605.5" cy="592.6" r="1.8" fill="#4f7ef5"/><circle cx="711.5" cy="601.3" r="1.8" fill="#4f7ef5"/><circle cx="817.1" cy="600.4" r="1.8" fill="#4f7ef5"/></g></svg>
      <!--CHARTS-END-->
    </div>
    <!--SCROLL-START-->
    <div class="abs" style="left:951.3px;top:61px;width:7.4px;height:534px;background:#fafafa"></div>
    <div class="abs" style="left:952px;top:63.8px;width:5.2px;height:214.8px;background:#c1c1c1;border-radius:2.6px"></div>
    <!--SCROLL-END-->
  </div>
  <!--EDGESIDE-START-->
  <div class="abs" style="left:969px;top:54px;width:1px;height:595px;background:#ebebeb"></div>
  <svg class="abs" style="left:978.20px;top:63.00px" width="12" height="12" viewBox="0 0 12 12" ><circle cx="4.8" cy="4.8" r="3.5" fill="none" stroke="#5c5c5c" stroke-width="1.3"/><path d="M7.4 7.4 L10.8 10.8" stroke="#8a4fd0" stroke-width="1.5" stroke-linecap="round"/></svg>
  <div class="abs" style="left:977px;top:88.6px;width:14.6px;height:14px;background:#fff;border-radius:2px"></div><svg class="abs" style="left:978.90px;top:90.10px" width="11" height="11" viewBox="0 0 11 11" ><g fill="none" stroke="#1a66c2" stroke-width="1.45" stroke-linecap="round" stroke-linejoin="round"><path d="M1.3 1.3 H2.8 Q4.6 1.3 4.6 3.1 V7.9 Q4.6 9.7 2.9 9.7 Q1.3 9.7 1.3 8.2 Q1.3 6.6 3 6.2 L4.6 5.5"/><path d="M9.7 1.3 H8.2 Q6.5 1.3 6.5 3.1 V7.9 Q6.5 9.7 8.2 9.7 H9.7"/><path d="M4.6 5.5 H9.2"/></g></svg>
  <div class="abs" style="left:975px;top:118px;width:18.6px;height:1px;background:#d4d4d4"></div>
  <svg class="abs" style="left:979.50px;top:135.70px" width="9" height="9" viewBox="0 0 9 9" ><path d="M4.5 0.6 V8.4 M0.6 4.5 H8.4" stroke="#3a3a3a" stroke-width="1"/></svg>
  <!--EDGESIDE-END-->
  <div class="abs" id="frame-t"></div>
  <div class="abs" id="corners"></div>
  <div class="abs" id="frame-l"></div>
  <div class="abs" id="frame-r"></div>
</div>
</body>
</html>
